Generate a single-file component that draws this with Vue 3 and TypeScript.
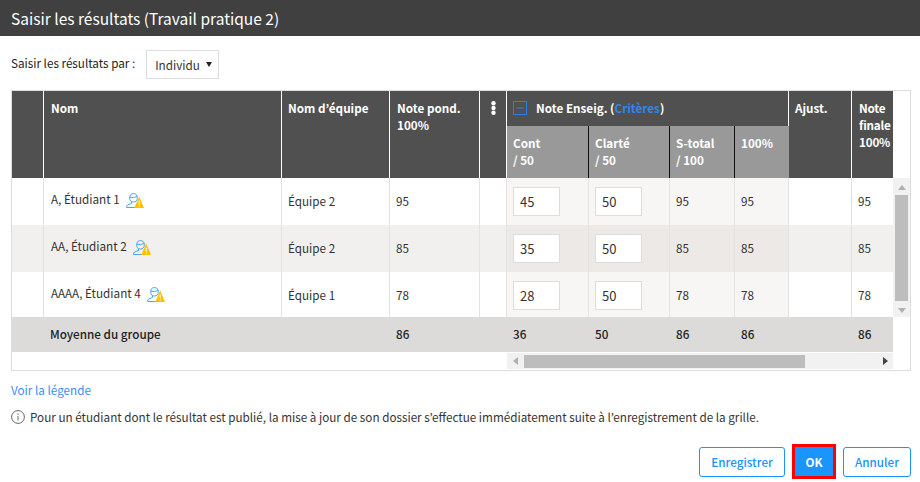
<script setup lang="ts">
interface Row {
  name: string;
  team: string;
  pond: string;
  cont: string;
  clarte: string;
  total: string;
  pct: string;
  final: string;
  tone: string;
}
const rows: Row[] = [
  { name: 'A, Étudiant 1', team: 'Équipe 2', pond: '95', cont: '45', clarte: '50', total: '95', pct: '95', final: '95', tone: 'odd' },
  { name: 'AA, Étudiant 2', team: 'Équipe 2', pond: '85', cont: '35', clarte: '50', total: '85', pct: '85', final: '85', tone: 'even' },
  { name: 'AAAA, Étudiant 4', team: 'Équipe 1', pond: '78', cont: '28', clarte: '50', total: '78', pct: '78', final: '78', tone: 'odd' },
];
</script>

<template>
  <div class="dialog">
    <header class="title">Saisir les résultats (Travail pratique 2)</header>
    <div class="filter">
      <label class="filter-label" for="mode">Saisir les résultats par :</label>
      <span class="mode-wrap">
        <select id="mode" class="mode">
          <option>Individu</option>
        </select>
      </span>
    </div>

    <div class="frame">
      <div class="grid">
        <div class="h dark span2"></div>
        <div class="h dark span2 bold wide">Nom</div>
        <div class="h dark span2 bold">Nom d’équipe</div>
        <div class="h dark span2 bold wide">Note pond.<br />100%</div>
        <div class="h dark span2 dots">
          <svg width="5" height="14" viewBox="0 0 5 14">
            <circle cx="2.5" cy="2.2" r="2.2" fill="#fff" />
            <circle cx="2.5" cy="7" r="2.2" fill="#fff" />
            <circle cx="2.5" cy="11.8" r="2.2" fill="#fff" />
          </svg>
        </div>
        <div class="h dark group bold">
          <svg class="collapse" width="14" height="14" viewBox="0 0 14 14">
            <rect x="0.5" y="0.5" width="13" height="13" fill="none" stroke="#2f7fe0" />
            <path d="M3.5 7h7" stroke="#2f7fe0" />
          </svg>
          <span>Note Enseig. (<span class="crit">Critères</span>)</span>
        </div>
        <div class="h dark span2 bold">Ajust.</div>
        <div class="h dark span2 bold last-head wide">Note<br />finale<br />100%</div>
        <div class="head-gap span2"></div>

        <div class="h sub bold">Cont<br />/ 50</div>
        <div class="h sub bold">Clarté<br />/ 50</div>
        <div class="h sub bold">S-total<br />/ 100</div>
        <div class="h sub bold noline">100%</div>

        <div class="vscroll">
          <span class="arrow up"></span>
          <span class="vthumb"></span>
          <span class="arrow down"></span>
        </div>

        <div v-for="r in rows" :key="r.name" class="row" :class="r.tone">
          <div class="c"></div>
          <div class="c name">
            <span>{{ r.name }}</span>
            <svg class="user" width="18" height="15" viewBox="0 0 18 15">
              <ellipse cx="7.5" cy="4.8" rx="3.8" ry="4.2" fill="none" stroke="#4ea5f5" />
              <path d="M3.8 4.2 Q7.5 5.4 11.2 3.4" fill="none" stroke="#4ea5f5" />
              <path d="M5.5 9 V10.4 L1.6 12 Q0.5 12.6 0.5 14.5 H9" fill="none" stroke="#4ea5f5" />
              <path d="M13.2 3.5 L18 15 H8.3 Z" fill="#ffc000" />
              <path d="M13.2 7.5 V11.5 M13.2 12.5 V13.7" stroke="#fff" />
            </svg>
          </div>
          <div class="c">{{ r.team }}</div>
          <div class="c">{{ r.pond }}</div>
          <div class="c"></div>
          <div class="c tint"><input class="score" :value="r.cont" /></div>
          <div class="c tint"><input class="score" :value="r.clarte" /></div>
          <div class="c tint">{{ r.total }}</div>
          <div class="c tint">{{ r.pct }}</div>
          <div class="c"></div>
          <div class="c noline">{{ r.final }}</div>
        </div>

        <div class="summary">
          <div></div>
          <div>Moyenne du groupe</div>
          <div></div>
          <div>86</div>
          <div></div>
          <div>36</div>
          <div>50</div>
          <div>86</div>
          <div>86</div>
          <div></div>
          <div>86</div>
        </div>
        <div class="summary-end"></div>

        <div class="hscroll">
          <span class="arrow left"></span>
          <span class="hthumb"></span>
          <span class="arrow right"></span>
        </div>
      </div>
    </div>

    <a class="legend">Voir la légende</a>
    <p class="note">
      <svg class="info" width="14" height="14" viewBox="0 0 14 14">
        <circle cx="7" cy="7" r="6.4" fill="none" stroke="#666" />
        <path d="M7 6v4.5M7 3.4v1.4" stroke="#666" />
      </svg>
      <span>Pour un étudiant dont le résultat est publié, la mise à jour de son dossier s’effectue immédiatement suite à l’enregistrement de la grille.</span>
    </p>

    <footer class="actions">
      <button class="btn save">Enregistrer</button>
      <button class="btn ok">OK</button>
      <button class="btn cancel">Annuler</button>
    </footer>
  </div>
</template>

<style>
html, body { margin: 0; background: #fff; }
</style>

<style scoped>
.dialog {
  width: 920px;
  height: 482px;
  overflow: hidden;
  font-family: "Noto Sans CJK KR", "Noto Sans", sans-serif;
  font-size: 11.7px;
  line-height: 17px;
  color: #333;
  background: #fff;
}
.title {
  height: 36px;
  padding-left: 11px;
  background: #404040;
  color: #fff;
  font-size: 15.5px;
  line-height: 36px;
}
.filter {
  height: 54px;
  padding: 14px 0 0 11px;
  box-sizing: border-box;
  display: flex;
  align-items: flex-start;
  gap: 11px;
  color: #222;
}
.filter-label { line-height: 25px; }
.mode-wrap { position: relative; display: block; height: 29px; }
.mode-wrap::after {
  content: "";
  position: absolute;
  right: 7px;
  top: 12px;
  border-style: solid;
  border-width: 5px 3px 0;
  border-color: #222 transparent transparent;
  pointer-events: none;
}
.mode {
  display: block;
  appearance: none;
  box-sizing: border-box;
  width: 73px;
  height: 29px;
  border: 1px solid #ddd;
  background: #fff;
  font: inherit;
  color: #333;
  padding: 0 0 0 8px;
  border-radius: 0;
}
.frame {
  margin-left: 11px;
  width: 898px;
  height: 279px;
  border: 1px solid #ddd;
}
.grid {
  display: grid;
  grid-template-columns: 32px 238px 108px 90px 27px 82px 81px 65px 54px 63px 41px 17px;
  grid-template-rows: 35px 52px 47px 47px 45px 35px 18px;
}
.row, .summary { display: contents; }
.h { box-sizing: border-box; border-right: 1px solid #fff; color: #fff; }
.span2 { grid-row: span 2; }
.dark { background: #505050; padding: 8px 0 0 6px; }
.dark.wide { padding-left: 7px; }
.bold { font-weight: 700; }
.dots { display: flex; justify-content: center; padding: 10px 0 0; }
.group {
  grid-column: span 4;
  display: flex;
  align-items: center;
  gap: 9px;
  padding: 0 0 2px 6px;
}
.collapse { margin-top: 1px; }
.crit { color: #2f86f0; font-weight: 700; }
.last-head { border-right: 0; letter-spacing: -0.2px; }
.head-gap { background: #fff; }
.sub { background: #999; padding: 8px 0 0 6px; border-right: 1px solid #111; }
.noline { border-right: 0; }
.vscroll {
  grid-column: 12;
  grid-row: 3 / span 3;
  background: #f1f1f1;
  display: flex;
  flex-direction: column;
  align-items: center;
  height: 140px;
}
.vthumb { width: 13px; height: 106px; background: #bdbdbd; }
.arrow { width: 0; height: 0; border-style: solid; border-color: transparent; }
.arrow.up { margin: 7px 0 5px; border-width: 0 4px 5px; border-bottom-color: #b0b0b0; }
.arrow.down { margin: 7px 0 0; border-width: 5px 4px 0; border-top-color: #b0b0b0; }
.c {
  box-sizing: border-box;
  border-right: 1px solid #e4e3e1;
  display: flex;
  align-items: flex-start;
  padding: 14px 0 0 6px;
  background: #fff;
  color: #333;
}
.row.even .c { background: #f1f0ee; }
.row .c.noline { border-right: 0; }
.row .c.tint { background: #f7f6f4; }
.row.even .c.tint { background: #ece9e6; }
.c:has(.score) { padding-top: 9px; }
.name { gap: 6px; padding: 12px 0 0 7px; color: #333; }
.user { margin-top: 3px; }
.score {
  box-sizing: border-box;
  width: 47px;
  height: 29px;
  border: 1px solid #ddd;
  background: #fff;
  padding: 0 0 0 6px;
  font: inherit;
  font-size: 13px;
  color: #333;
  border-radius: 0;
  outline: 0;
}
.summary > div {
  background: #dcdbd9;
  color: #222;
  padding: 8px 0 0 6px;
  font-weight: 500;
}
.summary-end { background: #fff; }
.hscroll {
  grid-column: 6 / span 6;
  grid-row: 7;
  margin-top: 1px;
  height: 16px;
  background: #f1f1f1;
  display: flex;
  align-items: center;
}
.hthumb { width: 281px; height: 13px; background: #bdbdbd; margin-left: 6px; }
.arrow.left { margin-left: 6px; border-width: 4px 5px 4px 0; border-right-color: #b0b0b0; }
.arrow.right { margin-left: 78px; border-width: 4px 0 4px 5px; border-left-color: #444; }
.legend {
  display: block;
  margin: 10px 0 0 11px;
  color: #3b8df7;
}
.note {
  display: flex;
  align-items: center;
  gap: 5px;
  margin: 10px 0 0 11px;
  color: #333;
}
.actions {
  display: flex;
  justify-content: flex-end;
  align-items: center;
  margin: 19px 9px 0 0;
  gap: 7px;
}
.btn {
  box-sizing: border-box;
  height: 30px;
  border: 1px solid #1a94ff;
  border-radius: 3px;
  background: #fff;
  color: #1a94ff;
  font: inherit;
  font-weight: 500;
  padding: 0;
}
.save { width: 86px; }
.cancel { width: 68px; }
.ok {
  width: 44px;
  height: 35px;
  border: 3px solid #f00;
  border-radius: 0;
  background: #1a94ff;
  color: #fff;
  font-weight: 700;
}
</style>
